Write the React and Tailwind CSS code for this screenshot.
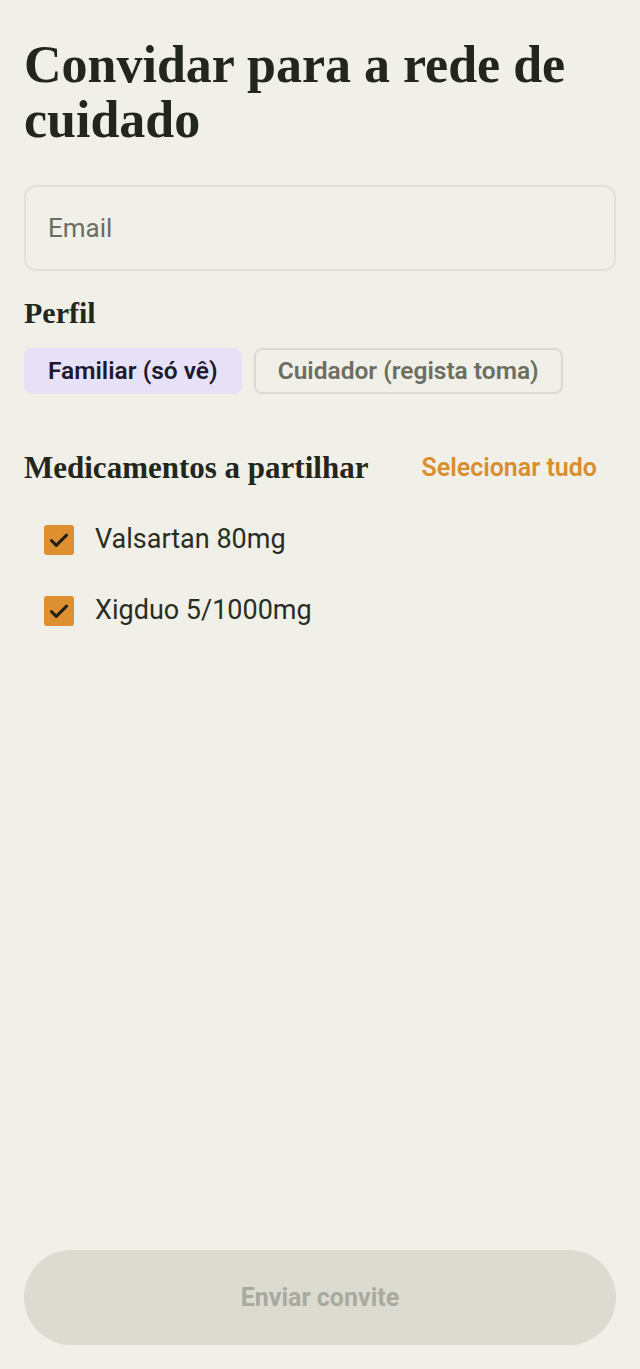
import React, { useState } from "react";

const serif = "font-['Liberation_Serif','DejaVu_Serif',serif]";
const sans = "font-['Roboto','Noto_Sans',sans-serif]";

const meds = ["Valsartan 80mg", "Xigduo 5/1000mg"];

const App = () => {
  const [role, setRole] = useState("familiar");
  const [checked, setChecked] = useState([true, true]);

  return (
    <div className={`flex flex-col h-screen bg-[#f0f0e8] px-6 pb-6 ${sans}`}>
      <h1 className={`${serif} font-bold text-[52px] leading-[55px] text-[#23261d] pt-[37px]`}>
        Convidar para a rede de cuidado
      </h1>

      <input
        type="email"
        placeholder="Email"
        className="mt-[38px] h-[86px] w-full rounded-xl border-2 border-[#e2e1d8] bg-transparent px-[22px] text-[26px] text-[#2a2d22] placeholder:text-[#6b6e60] focus:outline-none"
      />

      <h2 className={`${serif} font-bold text-[30px] text-[#23261d] mt-[24px] leading-[36px]`}>Perfil</h2>
      <div className="mt-[17px] flex gap-[12px]">
        <button
          onClick={() => setRole("familiar")}
          className={`h-[46px] rounded-lg px-[22px] text-[24.5px] font-semibold border-2 ${
            role === "familiar"
              ? "bg-[#e6e1f6] border-[#e6e1f6] text-[#1e1a2e]"
              : "border-[#dcdad0] text-[#6b6e60]"
          }`}
        >
          Familiar (só vê)
        </button>
        <button
          onClick={() => setRole("cuidador")}
          className={`h-[46px] rounded-lg px-[22px] text-[24.5px] font-semibold border-2 ${
            role === "cuidador"
              ? "bg-[#e6e1f6] border-[#e6e1f6] text-[#1e1a2e]"
              : "border-[#dcdad0] text-[#6b6e60]"
          }`}
        >
          Cuidador (regista toma)
        </button>
      </div>

      <div className="mt-[55px] flex items-center justify-between pr-[19px]">
        <h2 className={`${serif} font-bold text-[31px] text-[#23261d] leading-[36px]`}>
          Medicamentos a partilhar
        </h2>
        <button
          onClick={() => setChecked(meds.map(() => true))}
          className="text-[25px] font-semibold text-[#d98e2e]"
        >
          Selecionar tudo
        </button>
      </div>

      <div className="mt-[35px] flex flex-col gap-[35px] pl-5">
        {meds.map((m, i) => (
          <label key={m} className="flex h-[36px] items-center gap-[21px] cursor-pointer">
            <span
              onClick={() => setChecked(checked.map((c, j) => (j === i ? !c : c)))}
              className={`flex h-[30px] w-[30px] items-center justify-center rounded-[3px] ${
                checked[i] ? "bg-[#de8f2f]" : "border-2 border-[#6b6e60]"
              }`}
            >
              {checked[i] && (
                <svg width="26" height="26" viewBox="0 0 24 24" fill="none" stroke="#1f2118" strokeWidth="2.8" strokeLinecap="round" strokeLinejoin="round">
                  <path d="M5 12.5l4.5 4.5L19 7.5" />
                </svg>
              )}
            </span>
            <span className="text-[27px] text-[#2a2d22]">{m}</span>
          </label>
        ))}
      </div>

      <button
        disabled
        className="mt-auto h-[95px] w-full rounded-full bg-[#dbdbd2] text-[25px] font-bold text-[#a9aa9e]"
      >
        Enviar convite
      </button>
    </div>
  );
};

export default App;
